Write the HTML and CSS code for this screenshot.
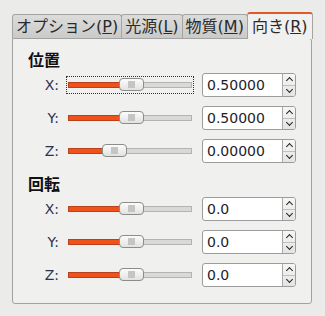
FILE: index.html
```html
<!DOCTYPE html>
<html lang="ja">
<head>
    <meta charset="UTF-8">
    <title>向き</title>
    <link rel="stylesheet" href="styles.css">
</head>
<body>
    <div class="tabs">
        <div class="tab">オプション(<u>P</u>)</div>
        <div class="tab">光源(<u>L</u>)</div>
        <div class="tab">物質(<u>M</u>)</div>
        <div class="tab active">向き(<u>R</u>)</div>
    </div>

    <div class="pane">
        <h2>位置</h2>
        <div class="rows">
            <label>X:</label>
            <div class="slider focus"><div class="track"><div class="fill" style="width: 62px"></div><div class="handle" style="left: 50px"><span></span></div></div></div>
            <div class="spin"><div class="spin-text">0.50000</div><div class="spin-btns"><span class="up"></span><span class="down"></span></div></div>

            <label>Y:</label>
            <div class="slider"><div class="track"><div class="fill" style="width: 62px"></div><div class="handle" style="left: 50px"><span></span></div></div></div>
            <div class="spin"><div class="spin-text">0.50000</div><div class="spin-btns"><span class="up"></span><span class="down"></span></div></div>

            <label>Z:</label>
            <div class="slider"><div class="track"><div class="fill" style="width: 45px"></div><div class="handle" style="left: 33px"><span></span></div></div></div>
            <div class="spin"><div class="spin-text">0.00000</div><div class="spin-btns"><span class="up"></span><span class="down"></span></div></div>
        </div>

        <h2>回転</h2>
        <div class="rows">
            <label>X:</label>
            <div class="slider"><div class="track"><div class="fill" style="width: 62px"></div><div class="handle" style="left: 50px"><span></span></div></div></div>
            <div class="spin"><div class="spin-text">0.0</div><div class="spin-btns"><span class="up"></span><span class="down"></span></div></div>

            <label>Y:</label>
            <div class="slider"><div class="track"><div class="fill" style="width: 62px"></div><div class="handle" style="left: 50px"><span></span></div></div></div>
            <div class="spin"><div class="spin-text">0.0</div><div class="spin-btns"><span class="up"></span><span class="down"></span></div></div>

            <label>Z:</label>
            <div class="slider"><div class="track"><div class="fill" style="width: 62px"></div><div class="handle" style="left: 50px"><span></span></div></div></div>
            <div class="spin"><div class="spin-text">0.0</div><div class="spin-btns"><span class="up"></span><span class="down"></span></div></div>
        </div>
    </div>
</body>
</html>
```

FILE: styles.css
```css
body {
    margin: 0;
    padding: 12px 13px 0 12px;
    background: #ebebea;
    font-family: "DejaVu Sans", "Noto Sans CJK JP", sans-serif;
    color: #222;
}

/* tab bar */
.tabs {
    display: flex;
    align-items: flex-end;
    height: 26px;
}

.tab {
    flex-shrink: 0;
    white-space: nowrap;
    height: 23px;
    line-height: 23px;
    padding: 0 3px;
    font-size: 16px;
    color: #2a2a2a;
    background: linear-gradient(#dcdcdb, #cacac9);
    border: 1px solid #a4a4a4;
    border-bottom: none;
    border-radius: 3px 3px 0 0;
    margin-right: -1px;
}

.tab u {
    text-decoration-thickness: 1px;
    text-underline-offset: 1px;
}

.tab.active {
    height: 25px;
    line-height: 25px;
    padding: 0 4px;
    background: #f0f0ef;
    border-top: 2px solid #e2582a;
    margin-bottom: -1px;
    position: relative;
    z-index: 1;
}

/* page */
.pane {
    width: 270px;
    height: 252px;
    padding: 12px 14px 0 14px;
    background: #f0f0ef;
    border: 1px solid #a2a2a2;
    border-radius: 0 3px 3px 3px;
}

h2 {
    margin: 0;
    font-size: 16px;
    line-height: 20px;
    font-weight: 700;
    color: #111;
    padding-left: 1px;
}

h2 + .rows {
    margin-top: 2px;
}

.rows + h2 {
    margin-top: 12px;
}

.rows {
    display: grid;
    grid-template-columns: 32px 128px 95px;
    column-gap: 7px;
    row-gap: 9px;
    align-items: center;
}

.rows .spin {
    margin-left: 1px;
}

label {
    text-align: right;
    font-size: 14px;
    color: #2b3350;
}

/* slider */
.slider {
    height: 18px;
    display: flex;
    align-items: center;
    padding: 0 2px;
}

.slider.focus {
    outline: 1px dotted #333;
    outline-offset: -1px;
}

.track {
    position: relative;
    flex-grow: 1;
    height: 4px;
    background: #d9d9d8;
    border: 1px solid #b3b3b2;
}

.fill {
    height: 100%;
    background: #f0521c;
    box-shadow: 0 0 0 1px #b8401a;
}

.handle {
    position: absolute;
    top: -5px;
    width: 23px;
    height: 11px;
    border: 1px solid #8c8c8c;
    border-radius: 4px;
    background: linear-gradient(#fcfcfc, #e2e2e1);
    display: flex;
    align-items: center;
    justify-content: center;
}

.handle span {
    width: 7px;
    height: 7px;
    background: radial-gradient(circle, #c4c4c4 0.7px, transparent 1px) 0 0 / 2px 2px;
}

/* spin box */
.spin {
    display: flex;
    height: 22px;
    border: 1px solid #9c9c9c;
    border-radius: 3px;
    background: #fff;
    overflow: hidden;
}

.spin-text {
    flex-grow: 1;
    padding-left: 4px;
    font-size: 14px;
    line-height: 22px;
    color: #1e1e2a;
}

.spin-btns {
    width: 12px;
    border-left: 1px solid #a8a8a8;
    background: linear-gradient(#f6f6f5, #e4e4e3);
    display: flex;
    flex-direction: column;
}

.spin-btns span {
    flex-grow: 1;
    display: flex;
    align-items: center;
    justify-content: center;
}

.spin-btns .up {
    border-bottom: 1px solid #c0c0c0;
}

.spin-btns span::before {
    content: "";
    width: 4px;
    height: 4px;
    border-left: 1.5px solid #222;
    border-top: 1.5px solid #222;
}

.spin-btns .up::before {
    transform: translateY(1px) rotate(45deg);
}

.spin-btns .down::before {
    transform: translateY(-1px) rotate(225deg);
}
```
